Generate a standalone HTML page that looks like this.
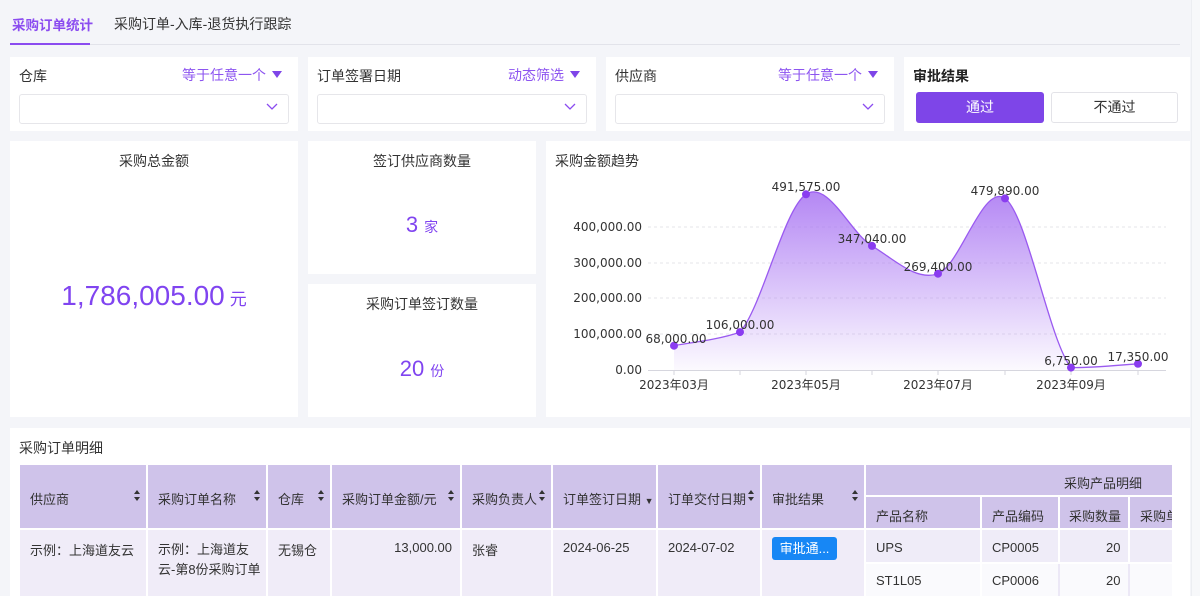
<!DOCTYPE html>
<html><head><meta charset="utf-8"><style>
*{margin:0;padding:0;box-sizing:border-box}
body{width:1200px;height:596px;overflow:hidden;background:#f4f5f9;font-family:"Liberation Sans","Noto Sans CJK SC",sans-serif;color:#333;position:relative;font-size:13px}
.a{position:absolute}
.card{position:absolute;background:#fff}
.lbl{position:absolute;font-size:14px;color:#333}
.op{position:absolute;font-size:14px;color:#8d55f0}
.tri{display:inline-block;width:0;height:0;border-left:5px solid transparent;border-right:5px solid transparent;border-top:7px solid #7e45e8;margin-left:6px;vertical-align:2px}
.sel{position:absolute;border:1px solid #e6e6ea;border-radius:3px;height:30px}
.chev{position:absolute;right:10px;top:8px}
.t{position:absolute;font-size:13px;color:#333;white-space:nowrap}
.c{position:absolute;border-right:2px solid #fff;border-bottom:2px solid #fff}
.h{background:#cfc3ea}
</style></head><body>
<div class="a" style="left:1191px;top:0;width:9px;height:596px;background:#f7f8fa;border-left:1px solid #eceef2"></div>
<div class="a" style="left:12px;top:14px;font-size:13.5px;font-weight:bold;color:#8b4cf0">采购订单统计</div>
<div class="a" style="left:114px;top:14px;font-size:14px;color:#333">采购订单-入库-退货执行跟踪</div>
<div class="a" style="left:10px;top:44px;width:1170px;height:1px;background:#e2e3ea"></div>
<div class="a" style="left:10px;top:43px;width:80px;height:2px;background:#8b4cf0"></div>

<div class="card" style="left:10px;top:57px;width:288px;height:74px">
<div class="lbl" style="left:9px;top:9px">仓库</div>
<div class="op" style="right:16px;top:8px">等于任意一个<span class="tri"></span></div>
<div class="sel" style="left:9px;top:37px;width:270px"><svg class="chev" width="12" height="8"><path d="M1 1L6 6L11 1" stroke="#8b4cf0" fill="none" stroke-width="1.3"/></svg></div>
</div>
<div class="card" style="left:308px;top:57px;width:288px;height:74px">
<div class="lbl" style="left:9px;top:9px">订单签署日期</div>
<div class="op" style="right:16px;top:8px">动态筛选<span class="tri"></span></div>
<div class="sel" style="left:9px;top:37px;width:270px"><svg class="chev" width="12" height="8"><path d="M1 1L6 6L11 1" stroke="#8b4cf0" fill="none" stroke-width="1.3"/></svg></div>
</div>
<div class="card" style="left:606px;top:57px;width:288px;height:74px">
<div class="lbl" style="left:9px;top:9px">供应商</div>
<div class="op" style="right:16px;top:8px">等于任意一个<span class="tri"></span></div>
<div class="sel" style="left:9px;top:37px;width:270px"><svg class="chev" width="12" height="8"><path d="M1 1L6 6L11 1" stroke="#8b4cf0" fill="none" stroke-width="1.3"/></svg></div>
</div>
<div class="card" style="left:904px;top:57px;width:286px;height:74px">
<div class="lbl" style="left:9px;top:9px;font-weight:bold;color:#222">审批结果</div>
<div class="a" style="left:12px;top:35px;width:128px;height:31px;background:#7e45e8;border-radius:3px;color:#fff;font-size:14px;text-align:center;line-height:31px">通过</div>
<div class="a" style="left:147px;top:35px;width:127px;height:31px;border:1px solid #e3e3e8;border-radius:3px;color:#333;font-size:14px;text-align:center;line-height:29px">不通过</div>
</div>

<div class="card" style="left:10px;top:141px;width:288px;height:276px">
<div class="a" style="left:0;width:288px;top:10px;text-align:center;font-size:14px">采购总金额</div>
<div class="a" style="left:0;width:288px;top:139px;text-align:center;color:#8044f0;font-size:28px">1,786,005.00<span style="font-size:17px;margin-left:5px">元</span></div>
</div>
<div class="card" style="left:308px;top:141px;width:228px;height:133px">
<div class="a" style="left:0;width:228px;top:10px;text-align:center;font-size:14px">签订供应商数量</div>
<div class="a" style="left:0;width:228px;top:71px;text-align:center;color:#8044f0;font-size:22px">3<span style="font-size:14px;margin-left:6px">家</span></div>
</div>
<div class="card" style="left:308px;top:284px;width:228px;height:133px">
<div class="a" style="left:0;width:228px;top:10px;text-align:center;font-size:14px">采购订单签订数量</div>
<div class="a" style="left:0;width:228px;top:72px;text-align:center;color:#8044f0;font-size:22px">20<span style="font-size:14px;margin-left:6px">份</span></div>
</div>

<div class="card" style="left:546px;top:141px;width:644px;height:276px">
<div class="a" style="left:9px;top:10px;font-size:14px">采购金额趋势</div>
</div>
<svg class="a" style="left:0;top:0" width="1200" height="420" font-family="DejaVu Sans, Liberation Sans, sans-serif" font-size="12" fill="#333">
<defs><linearGradient id="g" x1="0" y1="0" x2="0" y2="1"><stop offset="0" stop-color="#a772f2" stop-opacity="0.85"/><stop offset="1" stop-color="#a772f2" stop-opacity="0.04"/></linearGradient></defs>
<g stroke="#e6e6ea" stroke-dasharray="3,3">
<line x1="648" y1="227" x2="1166" y2="227"/><line x1="648" y1="263" x2="1166" y2="263"/><line x1="648" y1="298" x2="1166" y2="298"/><line x1="648" y1="334" x2="1166" y2="334"/></g>
<line x1="648" y1="370.5" x2="1166" y2="370.5" stroke="#d6d6de"/>
<g stroke="#d6d6de"><line x1="674" y1="370" x2="674" y2="375"/><line x1="740" y1="370" x2="740" y2="375"/><line x1="806" y1="370" x2="806" y2="375"/><line x1="872" y1="370" x2="872" y2="375"/><line x1="938" y1="370" x2="938" y2="375"/><line x1="1005" y1="370" x2="1005" y2="375"/><line x1="1071" y1="370" x2="1071" y2="375"/><line x1="1138" y1="370" x2="1138" y2="375"/></g>
<g text-anchor="end"><text x="642" y="231">400,000.00</text><text x="642" y="267">300,000.00</text><text x="642" y="302">200,000.00</text><text x="642" y="338">100,000.00</text><text x="642" y="374">0.00</text></g>
<g text-anchor="middle"><text x="674" y="389">2023年03月</text><text x="806" y="389">2023年05月</text><text x="938" y="389">2023年07月</text><text x="1071" y="389">2023年09月</text></g>
<path d="M674 345.7C685 343.4 718 340 740 332.1C762 306.9 784 208.7 806 194.3C828 179.9 850 232.7 872 245.9C894 259.1 916 281.6 938 273.7C960 265.8 983 182.7 1005 198.4C1027 214.1 1049 340 1071 367.6C1093 368 1127 364.4 1138 363.8L1138 370L674 370Z" fill="url(#g)"/>
<path d="M674 345.7C685 343.4 718 340 740 332.1C762 306.9 784 208.7 806 194.3C828 179.9 850 232.7 872 245.9C894 259.1 916 281.6 938 273.7C960 265.8 983 182.7 1005 198.4C1027 214.1 1049 340 1071 367.6C1093 368 1127 364.4 1138 363.8" fill="none" stroke="#9a5af0" stroke-width="1.3"/>
<g fill="#8a3cf0"><circle cx="674" cy="345.7" r="4"/><circle cx="740" cy="332.1" r="4"/><circle cx="806" cy="194.3" r="4"/><circle cx="872" cy="245.9" r="4"/><circle cx="938" cy="273.7" r="4"/><circle cx="1005" cy="198.4" r="4"/><circle cx="1071" cy="367.6" r="4"/><circle cx="1138" cy="363.8" r="4"/></g>
<g text-anchor="middle"><text x="676" y="343">68,000.00</text><text x="740" y="329">106,000.00</text><text x="806" y="191">491,575.00</text><text x="872" y="243">347,040.00</text><text x="938" y="271">269,400.00</text><text x="1005" y="195">479,890.00</text><text x="1071" y="365">6,750.00</text><text x="1138" y="361">17,350.00</text></g>
</svg>

<div class="card" style="left:10px;top:428px;width:1180px;height:168px">
<div class="a" style="left:9px;top:10px;font-size:14px">采购订单明细</div>
</div>
<div class="a" style="left:20px;top:465px;width:1152px;height:131px;overflow:hidden">
<div class="c h" style="left:0;top:0;width:128px;height:65px"></div>
<div class="c h" style="left:128px;top:0;width:120px;height:65px"></div>
<div class="c h" style="left:248px;top:0;width:64px;height:65px"></div>
<div class="c h" style="left:312px;top:0;width:130px;height:65px"></div>
<div class="c h" style="left:442px;top:0;width:91px;height:65px"></div>
<div class="c h" style="left:533px;top:0;width:105px;height:65px"></div>
<div class="c h" style="left:638px;top:0;width:104px;height:65px"></div>
<div class="c h" style="left:742px;top:0;width:104px;height:65px"></div>
<div class="c h" style="left:846px;top:0;width:310px;height:32px"></div>
<div class="c h" style="left:846px;top:32px;width:116px;height:33px"></div>
<div class="c h" style="left:962px;top:32px;width:78px;height:33px"></div>
<div class="c h" style="left:1040px;top:32px;width:70px;height:33px"></div>
<div class="c h" style="left:1110px;top:32px;width:60px;height:33px"></div>
<div class="c" style="left:0;top:65px;width:128px;height:70px;background:#f0ecf8"></div>
<div class="c" style="left:128px;top:65px;width:120px;height:70px;background:#f0ecf8"></div>
<div class="c" style="left:248px;top:65px;width:64px;height:70px;background:#f0ecf8"></div>
<div class="c" style="left:312px;top:65px;width:130px;height:70px;background:#f0ecf8"></div>
<div class="c" style="left:442px;top:65px;width:91px;height:70px;background:#f0ecf8"></div>
<div class="c" style="left:533px;top:65px;width:105px;height:70px;background:#f0ecf8"></div>
<div class="c" style="left:638px;top:65px;width:104px;height:70px;background:#f0ecf8"></div>
<div class="c" style="left:742px;top:65px;width:104px;height:70px;background:#f0ecf8"></div>
<div class="c" style="left:846px;top:65px;width:116px;height:34px;background:#efecf8"></div>
<div class="c" style="left:962px;top:65px;width:78px;height:34px;background:#efecf8"></div>
<div class="c" style="left:1040px;top:65px;width:70px;height:34px;background:#efecf8"></div>
<div class="c" style="left:1110px;top:65px;width:60px;height:34px;background:#efecf8"></div>
<div class="c" style="left:846px;top:99px;width:116px;height:34px;background:#fafafd;border-bottom-color:#e8e4f4"></div>
<div class="c" style="left:962px;top:99px;width:78px;height:34px;background:#fafafd;border-right-color:#ece8f6"></div>
<div class="c" style="left:1040px;top:99px;width:70px;height:34px;background:#fafafd;border-right-color:#ece8f6"></div>
<div class="c" style="left:1110px;top:99px;width:60px;height:34px;background:#fafafd"></div>
<div class="t" style="left:10px;top:24px">供应商</div>
<div class="t" style="left:138px;top:24px">采购订单名称</div>
<div class="t" style="left:258px;top:24px">仓库</div>
<div class="t" style="left:322px;top:24px">采购订单金额/元</div>
<div class="t" style="left:452px;top:24px">采购负责人</div>
<div class="t" style="left:543px;top:24px">订单签订日期 <span style="font-size:9px">▼</span></div>
<div class="t" style="left:648px;top:24px">订单交付日期</div>
<div class="t" style="left:752px;top:24px">审批结果</div>
<div class="t" style="left:1044px;top:8px">采购产品明细</div>
<div class="t" style="left:856px;top:41px">产品名称</div>
<div class="t" style="left:972px;top:41px">产品编码</div>
<div class="t" style="left:1049px;top:41px">采购数量</div>
<div class="t" style="left:1120px;top:41px">采购单</div>
<div class="t" style="left:10px;top:75px">示例：上海道友云</div>
<div class="t" style="left:138px;top:75px;line-height:20px">示例：上海道友<br>云-第8份采购订单</div>
<div class="t" style="left:258px;top:75px">无锡仓</div>
<div class="t" style="left:372px;top:75px;width:60px;text-align:right">13,000.00</div>
<div class="t" style="left:452px;top:75px">张睿</div>
<div class="t" style="left:543px;top:75px">2024-06-25</div>
<div class="t" style="left:648px;top:75px">2024-07-02</div>
<div class="a" style="left:752px;top:72px;width:65px;height:23px;background:#1787f5;border-radius:3px;color:#fff;font-size:13px;line-height:23px;text-align:center">审批通...</div>
<div class="t" style="left:856px;top:75px">UPS</div>
<div class="t" style="left:972px;top:75px">CP0005</div>
<div class="t" style="left:1086px;top:75px">20</div>
<div class="t" style="left:856px;top:108px">ST1L05</div>
<div class="t" style="left:972px;top:108px">CP0006</div>
<div class="t" style="left:1086px;top:108px">20</div>
<svg class="a" style="left:0;top:0" width="1152" height="70" fill="#333">
<g><path d="M114 29l3-4 3 4z M114 32l3 4 3-4z"/><path d="M234 29l3-4 3 4z M234 32l3 4 3-4z"/><path d="M298 29l3-4 3 4z M298 32l3 4 3-4z"/><path d="M428 29l3-4 3 4z M428 32l3 4 3-4z"/><path d="M519 29l3-4 3 4z M519 32l3 4 3-4z"/><path d="M728 29l3-4 3 4z M728 32l3 4 3-4z"/><path d="M832 29l3-4 3 4z M832 32l3 4 3-4z"/></g>
</svg>
</div>
</body></html>
